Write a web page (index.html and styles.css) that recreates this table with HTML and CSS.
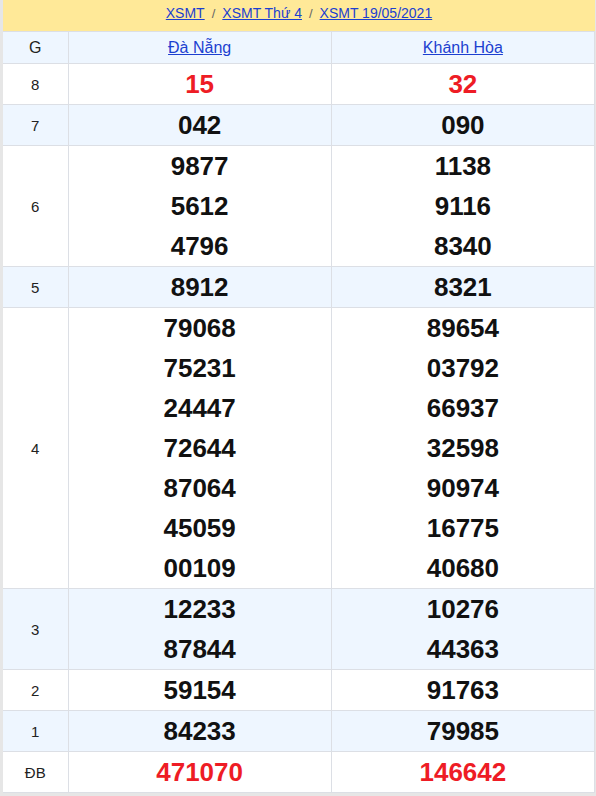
FILE: index.html
```html
<!DOCTYPE html>
<html>
<head>
<meta charset="utf-8">
<link rel="stylesheet" href="styles.css">
</head>
<body>
<div class="wrap">
  <div class="crumbs">
    <a href="#">XSMT</a><span class="sep">/</span><a href="#">XSMT Thứ 4</a><span class="sep">/</span><a href="#">XSMT 19/05/2021</a>
  </div>
  <table class="kq">
    <colgroup><col class="c-g"><col class="c-p"><col class="c-p"></colgroup>
    <tr class="alt head"><td>G</td><td><a href="#">Đà Nẵng</a></td><td><a href="#">Khánh Hòa</a></td></tr>
    <tr><td>8</td><td class="n red">15</td><td class="n red">32</td></tr>
    <tr class="alt"><td>7</td><td class="n">042</td><td class="n">090</td></tr>
    <tr><td>6</td><td class="n"><div>9877</div><div>5612</div><div>4796</div></td><td class="n"><div>1138</div><div>9116</div><div>8340</div></td></tr>
    <tr class="alt"><td>5</td><td class="n">8912</td><td class="n">8321</td></tr>
    <tr><td>4</td><td class="n"><div>79068</div><div>75231</div><div>24447</div><div>72644</div><div>87064</div><div>45059</div><div>00109</div></td><td class="n"><div>89654</div><div>03792</div><div>66937</div><div>32598</div><div>90974</div><div>16775</div><div>40680</div></td></tr>
    <tr class="alt"><td>3</td><td class="n"><div>12233</div><div>87844</div></td><td class="n"><div>10276</div><div>44363</div></td></tr>
    <tr><td>2</td><td class="n">59154</td><td class="n">91763</td></tr>
    <tr class="alt"><td>1</td><td class="n">84233</td><td class="n">79985</td></tr>
    <tr><td>ĐB</td><td class="n red">471070</td><td class="n red">146642</td></tr>
  </table>
</div>
</body>
</html>
```
FILE: styles.css
```css
html, body { margin: 0; padding: 0; }
body { background: #e6e6e6; font-family: "Liberation Sans", Arial, sans-serif; }
.wrap { margin-left: 3px; width: 592px; background: #fff; }
.crumbs { background: #ffe998; height: 31px; line-height: 26px; text-align: center; font-size: 14px; color: #555; }
.crumbs a { color: #1c3fd0; text-decoration: underline; }
.crumbs .sep { margin: 0 7px; color: #666; font-size: 13px; }
.kq { width: 592px; border-collapse: collapse; table-layout: fixed; }
.kq .c-g { width: 65px; }
.kq td { border: 1px solid #dcdfe5; text-align: center; font-size: 15px; color: #222; padding: 0; height: 40px; vertical-align: middle; }
.kq tr td:first-child { border-left: none; }
.kq tr td:last-child { border-right: 1px solid #dcdfe5; }
.kq tr.alt td { background: #eef6ff; }
.kq tr.head td { height: 31px; font-size: 16px; }
.kq tr.head a { color: #1c3fd0; font-size: 16px; }
.kq td.n { font-size: 26px; font-weight: bold; color: #111; line-height: 40px; }
.kq td.n div { height: 40px; }
.kq td.red { color: #ee1c25; }
```
